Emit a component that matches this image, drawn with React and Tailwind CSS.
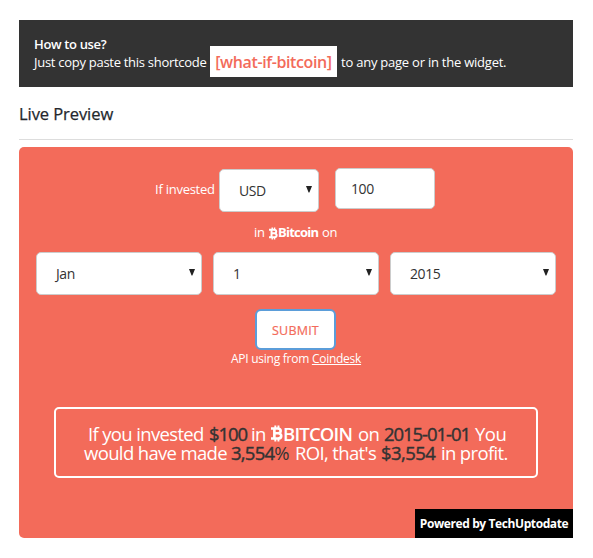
function BitcoinSign({ className }) {
  return (
    <svg viewBox="0 0 10 14" fill="none" stroke="currentColor" className={className}>
      <path d="M0 2.8H5.6C8.8 2.8 8.8 6.8 6 6.8H2.7M6 6.8C9.4 6.8 9.4 11.2 5.8 11.2H0M2.8 2.8V11.2" strokeWidth="2.2" />
      <path d="M3.6 0.3V3M6.2 0.3V3M3.6 11V13.7M6.2 11V13.7" strokeWidth="1.6" />
    </svg>
  );
}

function Select({ value, className }) {
  return (
    <div className={`flex h-[43px] items-center justify-between rounded-[5px] border border-[#ccc] bg-white pr-[6px] pl-[19px] text-[14px] tracking-[-0.4px] text-[#333] ${className}`}>
      <span>{value}</span>
      <svg viewBox="0 0 6 7" className="relative -top-px h-[7px] w-[6px] fill-[#222]">
        <path d="M0 0H6L3.4 6.5H2.6Z" />
      </svg>
    </div>
  );
}

function Strong({ children, className }) {
  return <span className={`text-[#333] [-webkit-text-stroke:0.4px_#333] ${className}`}>{children}</span>;
}

export default function App() {
  return (
    <main className="h-[558px] w-[593px] bg-white px-[19px] pt-5 pr-5 font-['Open_Sans',sans-serif] text-[13px] whitespace-nowrap">
      <section className="h-[67px] bg-[#333] pt-4 pl-[15px] text-white">
        <div className="h-[10px] leading-[17px] font-semibold tracking-[-0.35px]">How to use?</div>
        <div className="flex h-[31px] items-center">
          <span className="mt-0.5 w-44 tracking-[-0.28px]">Just copy paste this shortcode</span>
          <code className="flex h-[31px] w-[127px] items-center justify-center bg-white pt-px font-['Open_Sans',sans-serif] text-[16px] font-semibold tracking-[-0.38px] text-[#f36b5a]">
            [what-if-bitcoin]
          </code>
          <span className="mt-0.5 ml-1 tracking-[-0.23px]">to any page or in the widget.</span>
        </div>
      </section>
      <h2 className="mt-4 h-9 text-[16.5px] leading-[22px] tracking-[-0.07px] text-[#23282d] [-webkit-text-stroke:0.25px_#23282d]">Live Preview</h2>
      <hr className="border-[#ddd]" />
      <section className="mt-[7px] flex h-[391px] flex-col rounded-[5px] rounded-br-none bg-[#f36b5a] text-white">
        <div className="flex h-[65px] pt-[21px] pl-[136px]">
          <span className="w-16 pt-3 leading-[18px] tracking-[-0.25px]">If invested</span>
          <Select value="USD" className="mt-px w-[100px]" />
          <div className="ml-4 flex h-[41px] w-[100px] items-center rounded-[5px] border border-[#ccc] bg-white pl-[15px] text-[14px] tracking-[-0.4px] text-[#333]">100</div>
        </div>
        <div className="mt-3 flex h-[18px] items-center pl-[235px] tracking-[-0.38px]">
          <span className="w-[15px]">in</span>
          <BitcoinSign className="h-[13px] w-[9px]" />
          <span className="w-[44px] font-bold tracking-[-0.75px]">Bitcoin</span>
          <span>on</span>
        </div>
        <div className="mt-[10px] flex gap-[11px] pl-[17px]">
          <Select value="Jan" className="w-[166px]" />
          <Select value="1" className="w-[166px]" />
          <Select value="2015" className="w-[166px]" />
        </div>
        <button className="mt-[14px] ml-[236px] h-[41px] w-[81px] rounded-[6px] border-2 border-[#5b9dd9] bg-white pt-[3px] text-[12.5px] tracking-[0.2px] text-[#f36b5a] [-webkit-text-stroke:0.2px_#f36b5a]">SUBMIT</button>
        <div className="pl-[212px] text-[12px] leading-[18px] tracking-[-0.26px]">
          API using from <a className="underline">Coindesk</a>
        </div>
        <div className="mt-[39px] ml-[35px] h-[71px] w-[484px] rounded-[5px] border-2 border-white pt-[15px] text-[18.5px] leading-[19px] tracking-[-0.65px]">
          <div className="flex items-center pl-8">
            <span className="w-[121px]">If you invested</span>
            <Strong className="w-[42px] tracking-[-1.1px]">$100</Strong>
            <span className="w-[20px]">in</span>
            <BitcoinSign className="h-[17px] w-[12px]" />
            <span className="w-[75px] font-semibold tracking-[-0.8px]">BITCOIN</span>
            <span className="w-[26px]">on</span>
            <Strong className="w-[91px] tracking-[-1.05px]">2015-01-01</Strong>
            <span className="tracking-[-0.5px]">You</span>
          </div>
          <div className="flex items-center pl-7">
            <span className="w-[147px]">would have made</span>
            <span className="w-[64px] text-[#333] tracking-[-0.75px]"><Strong>3,554</Strong>%</span>
            <span className="w-[86px]">ROI, that's</span>
            <Strong className="w-[60px] tracking-[-0.55px]">$3,554</Strong>
            <span>in profit.</span>
          </div>
        </div>
        <div className="mt-auto flex h-[29px] w-[158px] items-center justify-center self-end bg-black text-[12px] font-bold tracking-[-0.4px]">Powered by TechUptodate</div>
      </section>
    </main>
  );
}
